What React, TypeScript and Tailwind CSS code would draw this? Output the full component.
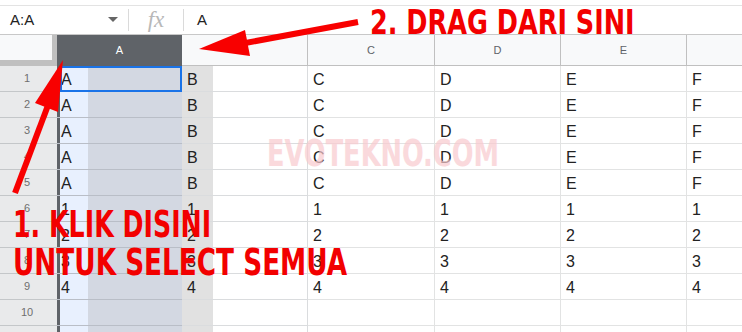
import React from "react";

const rowsData: string[][] = [
  ["A", "B", "C", "D", "E", "F"],
  ["A", "B", "C", "D", "E", "F"],
  ["A", "B", "C", "D", "E", "F"],
  ["A", "B", "C", "D", "E", "F"],
  ["A", "B", "C", "D", "E", "F"],
  ["1", "1", "1", "1", "1", "1"],
  ["2", "2", "2", "2", "2", "2"],
  ["3", "3", "3", "3", "3", "3"],
  ["4", "4", "4", "4", "4", "4"],
  ["", "", "", "", "", ""],
  ["", "", "", "", "", ""],
];

function Row({ n, cells }: { n: number; cells: string[] }) {
  return (
    <div className="flex h-[26px] shrink-0">
      <div className="w-[57px] shrink-0 bg-[#e9eaeb] border-b border-[#c4c7c9] flex items-center justify-center text-[11px] text-[#6f6f6f] pr-[3px]">
        {n}
      </div>
      <div className="relative w-[125px] shrink-0 border-b border-[#b9bec7] bg-[linear-gradient(to_right,#5f6368_0,#5f6368_3px,#e8f0fe_3px,#e8f0fe_31px,#d3d8e2_31px)] flex items-end pl-[4px] pb-[3px] text-[16px] leading-none text-[#222]">
        {cells[0]}
        {n === 1 && (
          <div className="absolute left-[3px] top-0 right-0 bottom-[-1px] border-2 border-[#1a73e8]" />
        )}
      </div>
      <div className="w-[126px] shrink-0 border-b border-r border-[#dadcde] bg-[linear-gradient(to_right,#e1e1e1_0,#e1e1e1_31px,#ffffff_31px)] flex items-end pl-[5px] pb-[3px] text-[16px] leading-none text-[#222]">
        {cells[1]}
      </div>
      <div className="w-[127px] shrink-0 border-b border-r border-[#e2e3e3] flex items-end pl-[5px] pb-[3px] text-[16px] leading-none text-[#222]">
        {cells[2]}
      </div>
      <div className="w-[126px] shrink-0 border-b border-r border-[#e2e3e3] flex items-end pl-[5px] pb-[3px] text-[16px] leading-none text-[#222]">
        {cells[3]}
      </div>
      <div className="w-[126px] shrink-0 border-b border-r border-[#e2e3e3] flex items-end pl-[5px] pb-[3px] text-[16px] leading-none text-[#222]">
        {cells[4]}
      </div>
      <div className="flex-1 border-b border-[#e2e3e3] flex items-end pl-[5px] pb-[3px] text-[16px] leading-none text-[#222]">
        {cells[5]}
      </div>
    </div>
  );
}

export default function App() {
  return (
    <div className="relative w-[742px] h-[332px] overflow-hidden bg-white font-['Liberation_Sans',Arial,sans-serif]">
      {/* top strip */}
      <div className="h-[6px] border-b border-[#e3e3e3]" />
      {/* formula bar */}
      <div className="h-[29px] flex items-center border-b border-[#c8c8c8] text-[15px] text-[#222]">
        <div className="w-[128px] flex items-center pl-[10px] pr-[10px]">
          <span className="flex-1">A:A</span>
          <svg width="10" height="6" viewBox="0 0 10 6">
            <path d="M0 0 L10 0 L5 5 Z" fill="#666" />
          </svg>
        </div>
        <div className="w-px h-[22px] bg-[#dadada]" />
        <div className="w-[54px] flex items-center justify-center font-['Liberation_Serif',serif] italic text-[23px] text-[#b8b8b8] leading-none pb-[2px]">
          fx
        </div>
        <div className="w-px h-[22px] bg-[#dadada]" />
        <div className="pl-[13px]">A</div>
      </div>
      {/* column headers */}
      <div className="flex h-[31px] text-[11px] text-[#5f6368]">
        <div className="w-[57px] shrink-0 bg-[#f8f9fa] border-r-[5px] border-b-[6px] border-[#c0c0c0]" />
        <div className="w-[125px] shrink-0 bg-[#5f6368] text-white flex items-center justify-center">A</div>
        <div className="w-[126px] shrink-0 bg-[#f8f9fa] border-b border-r border-[#c0c0c0]" />
        <div className="w-[127px] shrink-0 bg-[#f8f9fa] border-b border-r border-[#c0c0c0] flex items-center justify-center">C</div>
        <div className="w-[126px] shrink-0 bg-[#f8f9fa] border-b border-r border-[#c0c0c0] flex items-center justify-center">D</div>
        <div className="w-[126px] shrink-0 bg-[#f8f9fa] border-b border-r border-[#c0c0c0] flex items-center justify-center">E</div>
        <div className="flex-1 bg-[#f8f9fa] border-b border-[#c0c0c0]" />
      </div>
      {rowsData.map((cells, i) => (
        <Row key={i} n={i + 1} cells={cells} />
      ))}

      {/* watermark */}
      <div className="absolute left-[267px] top-[135px] origin-left scale-x-[0.77] font-['DejaVu_Sans_Condensed','DejaVu_Sans',sans-serif] font-bold text-[37px] leading-none text-[#f9c9ce] opacity-70 whitespace-nowrap">
        EVOTEKNO.COM
      </div>

      {/* arrows */}
      <svg className="absolute inset-0 pointer-events-none" width="742" height="332" viewBox="0 0 742 332">
        <line x1="358" y1="22" x2="240" y2="44" stroke="#f80000" strokeWidth="6" />
        <polygon points="199,49 245,30 250,56" fill="#f80000" />
        <line x1="15" y1="193" x2="50" y2="100" stroke="#f80000" strokeWidth="6" />
        <polygon points="63,60 35,103 58,112" fill="#f80000" />
      </svg>

      {/* annotations */}
      <div className="absolute left-[370px] top-[6px] origin-left scale-x-[0.86] font-['DejaVu_Sans_Condensed','DejaVu_Sans',sans-serif] font-bold text-[33px] leading-none text-[#f20000] whitespace-nowrap">
        2. DRAG DARI SINI
      </div>
      <div className="absolute left-[13px] top-[206px] origin-left scale-x-[0.76] font-['DejaVu_Sans_Condensed','DejaVu_Sans',sans-serif] font-bold text-[37px] leading-none text-[#f20000] whitespace-nowrap">
        1. KLIK DISINI
      </div>
      <div className="absolute left-[13px] top-[244px] origin-left scale-x-[0.79] font-['DejaVu_Sans_Condensed','DejaVu_Sans',sans-serif] font-bold text-[37px] leading-none text-[#f20000] whitespace-nowrap">
        UNTUK SELECT SEMUA
      </div>
    </div>
  );
}
